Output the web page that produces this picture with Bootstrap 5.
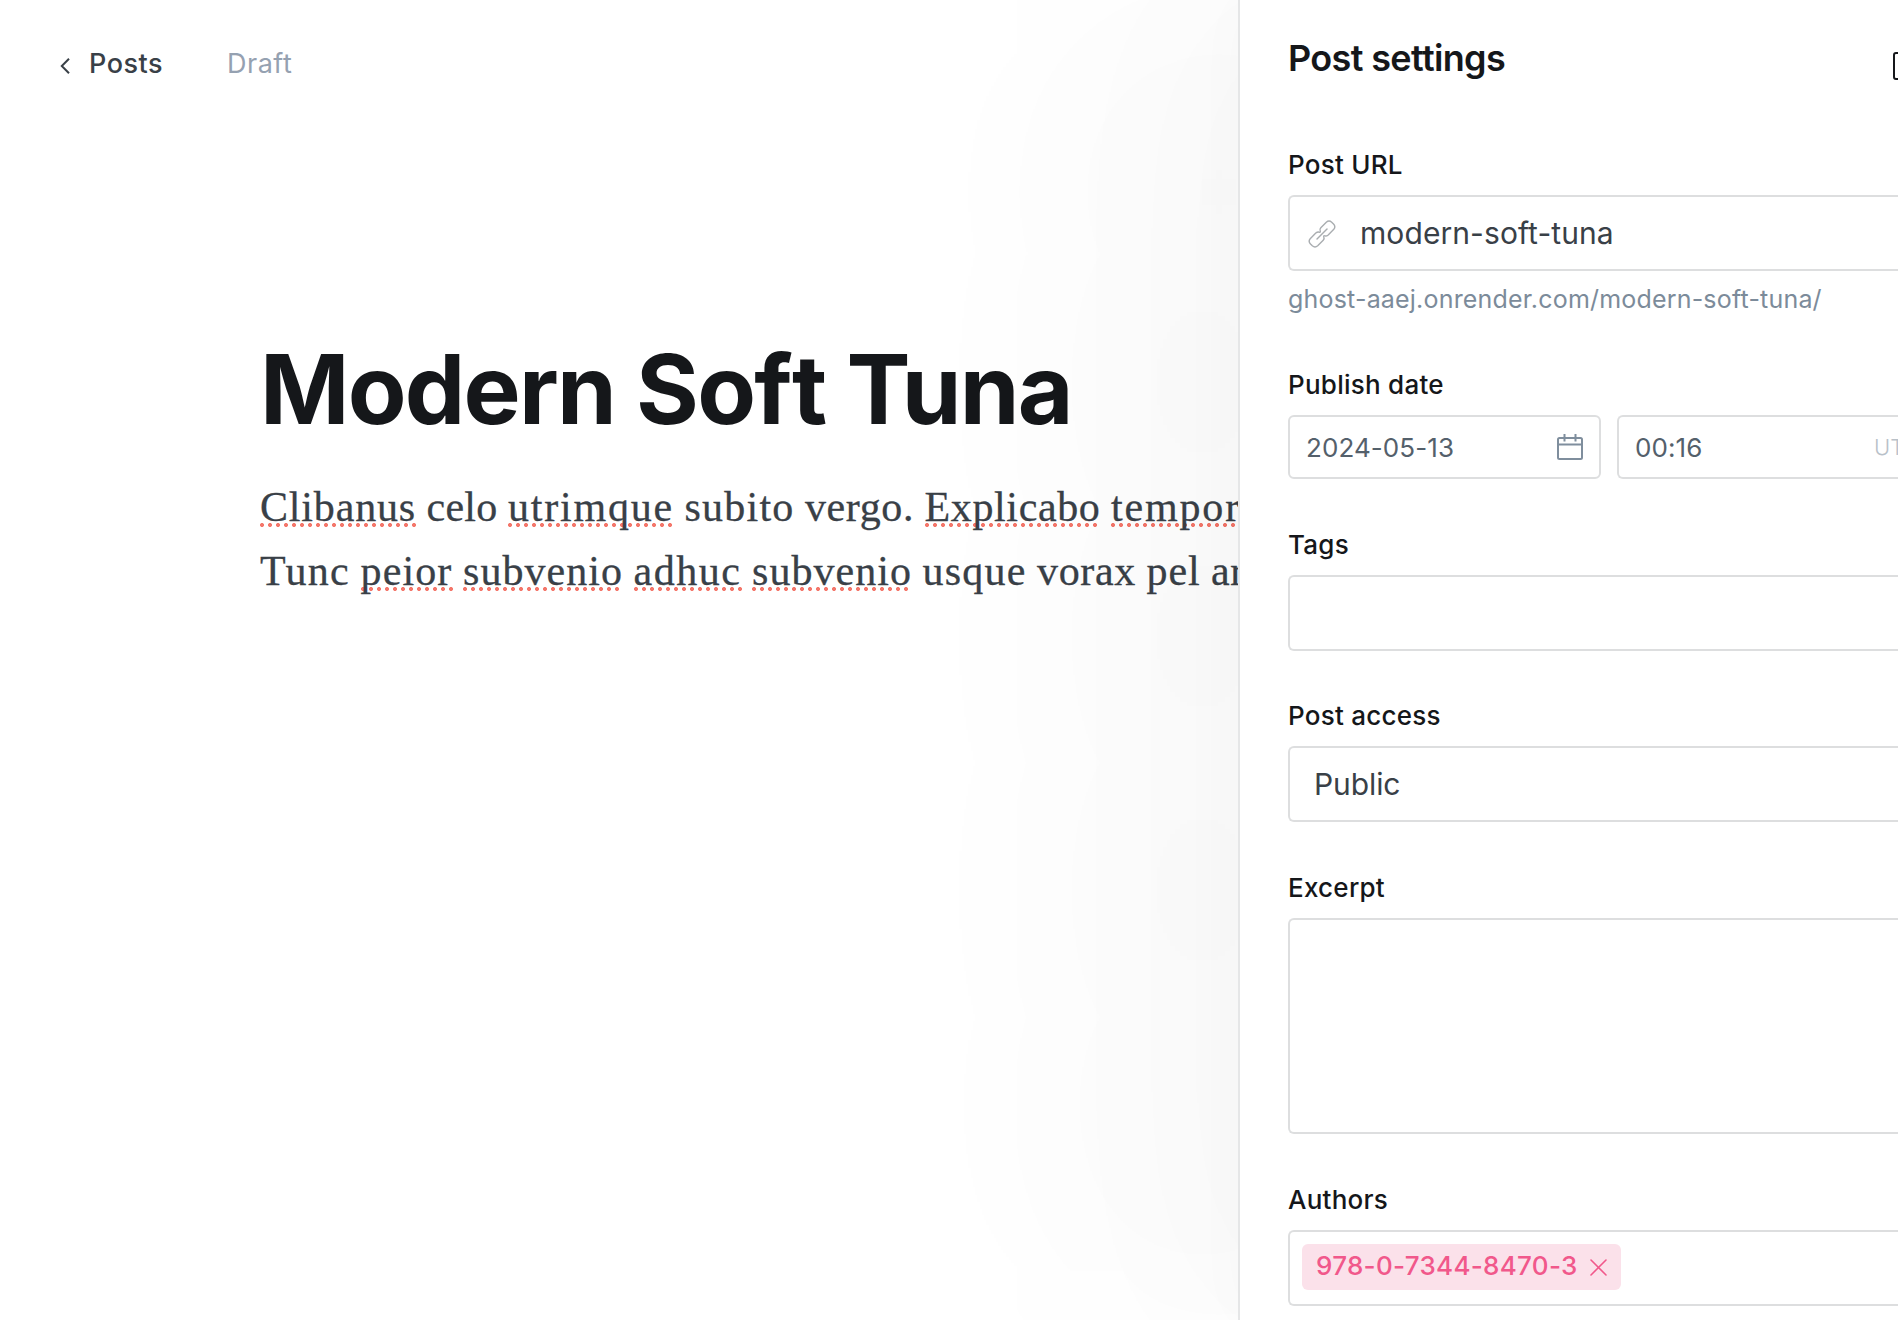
<!DOCTYPE html>
<html lang="en">
<head>
<meta charset="utf-8">
<title>Post editor</title>
<link href="https://cdn.jsdelivr.net/npm/bootstrap@5.3.0/dist/css/bootstrap.min.css" rel="stylesheet">
<style>
body{font-family:Inter,"Liberation Sans",sans-serif;height:1320px;color:#15171a;background:#fff;font-size:26px;font-variant-ligatures:none;font-feature-settings:"calt" 0}
.editor{width:1238px}
.topline{padding:48px 0 0 60px;height:80px;line-height:34px;font-size:27px;letter-spacing:.5px}
.back-link{color:#394047;font-weight:500;gap:19px;margin-right:64px}
.back-link svg{margin-top:4px}
.state{color:#95a1b1}
.canvas{padding:249px 0 0 260px}
.post-title{font-size:96px;line-height:120px;font-weight:700;letter-spacing:-1.75px;margin:0 0 26px;white-space:nowrap}
.loose{letter-spacing:-.4px}
.prose{font-family:"Liberation Serif",serif;font-size:42px;line-height:64px;color:#394047;white-space:nowrap;-webkit-text-stroke:.3px #394047}
.sp{background:radial-gradient(circle at 2px 2px,#f4776b 1.7px,transparent 2.3px) 0 calc(100% - 3px)/8px 4px repeat-x}
.panel{width:660px;border-left:2px solid #e5e6e7;padding-left:48px;box-shadow:-200px 0 240px rgba(0,0,0,.018),-40px 0 200px rgba(0,0,0,.025),0 0 60px rgba(0,0,0,.02)}
.panel-head{height:149px;padding-top:35px}
.panel-head svg{margin-top:16px}
.panel-title{font-size:36px;line-height:46px;font-weight:600;margin:0;letter-spacing:-.65px}
.group{margin-bottom:50px}
.group.tight{margin-bottom:49px}
.url-group{margin-bottom:55px}
.lbl{display:block;font-weight:500;line-height:32px;margin-bottom:14px;letter-spacing:.25px}
.box{height:76px;border:2px solid #dddedf;border-right:0;border-radius:6px 0 0 6px;font-size:30px;color:#394047;letter-spacing:.08px}
.box.sm-box{height:64px;font-size:26px;color:#54606b;padding-left:16px}
.box.date-box{width:313px;border-right:2px solid #dddedf;border-radius:6px;padding-right:16px;margin-right:16px}
.box.tall{height:216px}
.slug{margin-left:14px}
.access{padding-left:24px;letter-spacing:-.1px}
.zone{font-size:22px;color:#b9c1c9;width:24px;font-weight:300}
.hint{font-size:25px;line-height:30px;color:#7c8b9a;margin-top:13px;letter-spacing:.19px}
.author{height:46px;background:#fbe1ea;color:#f1588b;border-radius:6px;font-size:26px;font-weight:500;padding:0 14px 0 14px;gap:12px;margin:12px 0 0 12px}
.author span{margin-top:-3px;letter-spacing:.3px}
</style>
</head>
<body class="overflow-hidden d-flex">
<main class="editor flex-shrink-0 overflow-hidden">
  <div class="topline d-flex align-items-center">
    <div class="back-link d-flex align-items-center">
      <svg width="10" height="18" viewBox="0 0 10 18" fill="none" stroke="#394047" stroke-width="2"><path d="M9 1.800 1.800 9 9 16.200"/></svg>
      <span>Posts</span>
    </div>
    <span class="state">Draft</span>
  </div>
  <div class="canvas">
    <h1 class="post-title">Modern So<span class="loose">f</span>t Tuna</h1>
    <div class="prose"><span class="sp" data-w="156">Clibanus</span> <span data-w="71">celo</span> <span class="sp" data-w="166">utrimque</span> <span data-w="110">subito</span> <span data-w="109">vergo.</span> <span class="sp" data-w="176">Explicabo</span> <span class="sp" data-w="130">tempor</span><br><span data-w="90">Tunc</span> <span class="sp" data-w="92">peior</span> <span class="sp" data-w="160">subvenio</span> <span class="sp" data-w="108">adhuc</span> <span class="sp" data-w="160">subvenio</span> <span data-w="104">usque</span> <span data-w="99">vorax</span> <span data-w="54">pel</span> <span data-w="34">ar</span></div>
  </div>
</main>
<aside class="panel bg-white flex-shrink-0 position-relative overflow-hidden">
  <div class="panel-head d-flex justify-content-between">
    <h2 class="panel-title">Post settings</h2>
    <svg width="5" height="30" viewBox="0 0 5 30" fill="none" stroke="#15171a" stroke-width="2"><rect x="1" y="2" width="28" height="26" rx="2"/></svg>
  </div>
  <div class="url-group">
    <span class="lbl">Post URL</span>
    <div class="box d-flex align-items-center">
      <svg class="ms-2" width="48" height="44" viewBox="-2 0 48 44" fill="none" stroke="#a9adb0" stroke-width="1.400" stroke-linecap="round" stroke-linejoin="round"><path id="half" d="M20.300 20.500Q19.300 18.300 20.800 16.800L26.300 11.200Q29 8.800 31.700 11.200L33.500 13Q36 15.700 33.800 18.300L28.200 23.900Q26.200 25.700 24 24.700"/><use href="#half" transform="rotate(180 22 23)"/><path d="m17 28 10-10"/></svg>
      <span class="slug">modern-soft-tuna</span>
    </div>
    <div class="hint">ghost-aaej.onrender.com/modern-soft-tuna/</div>
  </div>
  <div class="group">
    <span class="lbl">Publish date</span>
    <div class="d-flex">
      <div class="box sm-box date-box d-flex align-items-center justify-content-between">
        <span>2024-05-13</span>
        <svg width="26" height="28" viewBox="0 0 26 28" fill="none" stroke="#7f8e9d" stroke-width="2"><rect x="1" y="5" width="24" height="21" rx="1.500"/><path d="M1 11.500h24M7.500 1v7.500M18.500 1v7.500"/></svg>
      </div>
      <div class="box sm-box flex-fill d-flex align-items-center justify-content-between overflow-hidden">
        <span>00:16</span>
        <span class="zone text-nowrap overflow-hidden">UTC</span>
      </div>
    </div>
  </div>
  <div class="group tight">
    <span class="lbl">Tags</span>
    <div class="box"></div>
  </div>
  <div class="group">
    <span class="lbl">Post access</span>
    <div class="box access d-flex align-items-center">Public</div>
  </div>
  <div class="group">
    <span class="lbl">Excerpt</span>
    <div class="box tall"></div>
  </div>
  <div>
    <span class="lbl">Authors</span>
    <div class="box d-flex align-items-start">
      <div class="author d-flex align-items-center">
        <span>978-0-7344-8470-3</span>
        <svg width="17" height="18" viewBox="0 0 17 18" stroke="#f1588b" stroke-width="1.600" stroke-linecap="round"><path d="m1 2 15 15M16 2 1 17"/></svg>
      </div>
    </div>
  </div>
</aside>
<script src="https://cdn.jsdelivr.net/npm/bootstrap@5.3.0/dist/js/bootstrap.bundle.min.js"></script>
<script>
// Track each word of the body copy to its set width
document.querySelectorAll('.prose [data-w]').forEach(function (word) {
  var natural = word.getBoundingClientRect().width;
  word.style.letterSpacing = ((word.dataset.w - natural) / word.textContent.length) + 'px';
});
</script>
</body>
</html>
